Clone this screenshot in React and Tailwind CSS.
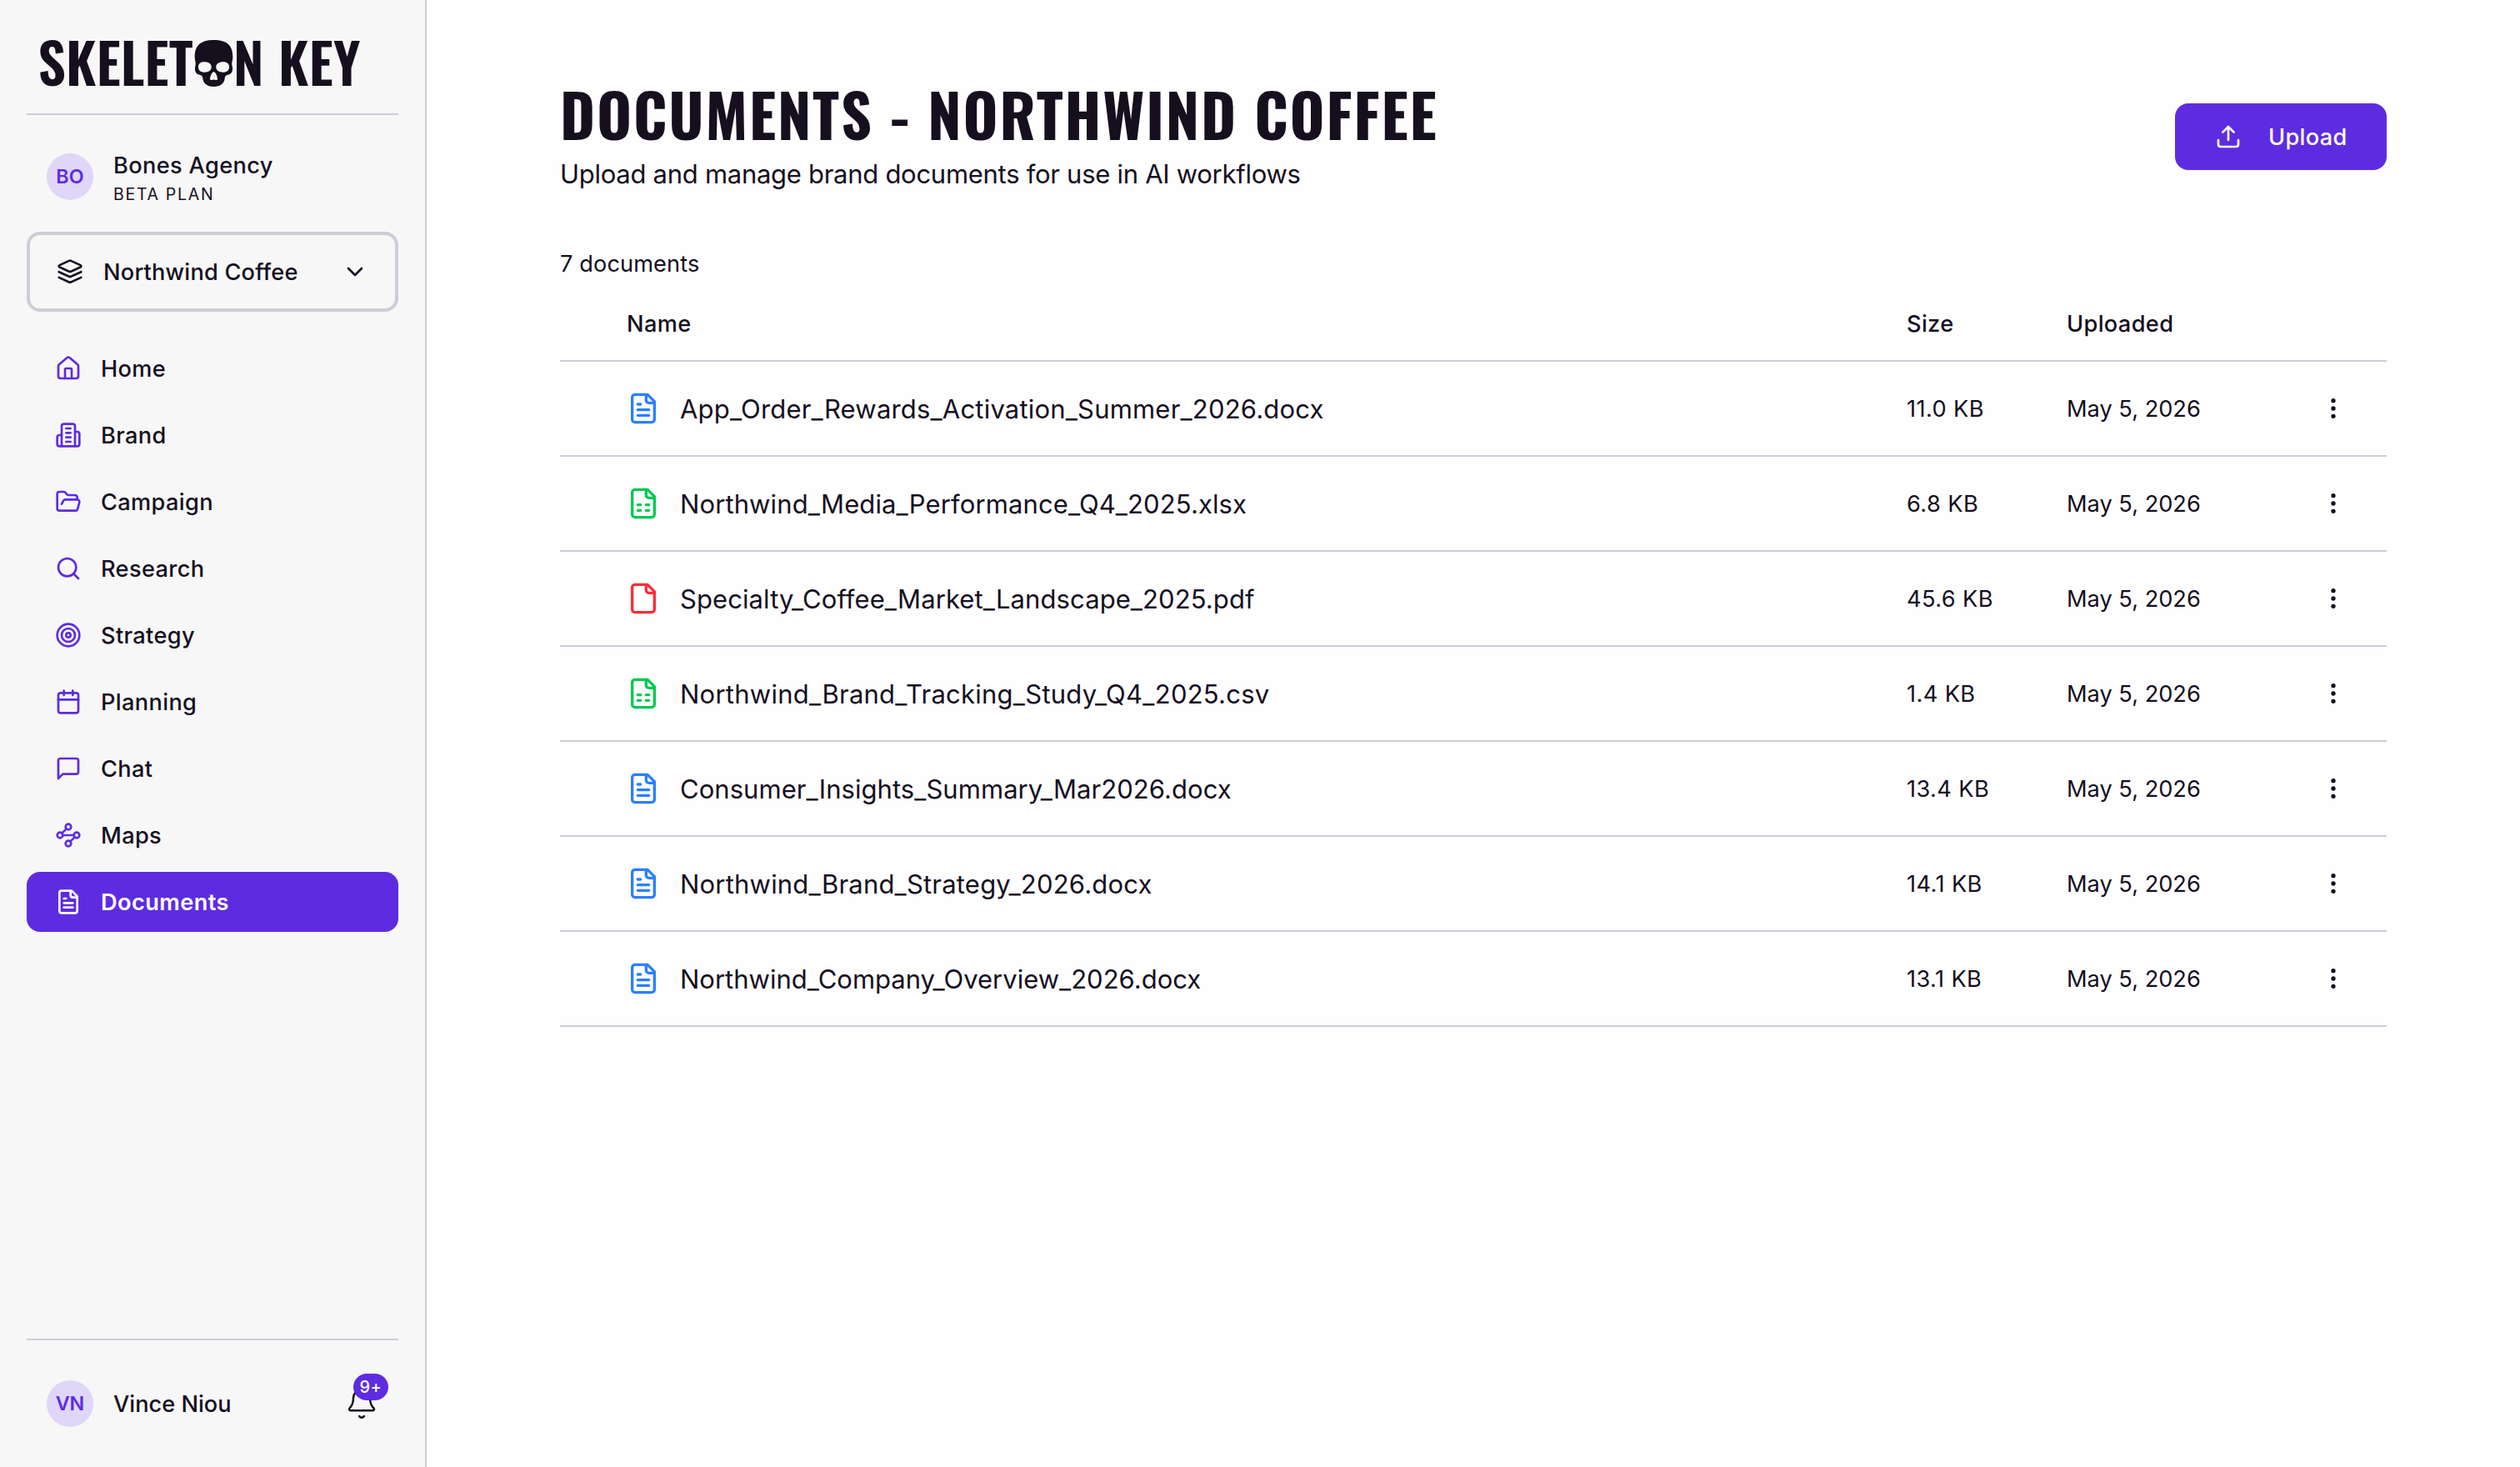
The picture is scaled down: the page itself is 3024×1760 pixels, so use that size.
import {
  Bell,
  Calendar,
  ChevronDown,
  EllipsisVertical,
  FolderOpen,
  House,
  Search,
  Target,
} from 'lucide-react';

// Outline icons that share the lucide stroke style
function Icon({ children, className, strokeWidth = 2 }) {
  return (
    <svg
      viewBox="0 0 24 24"
      fill="none"
      stroke="currentColor"
      strokeWidth={strokeWidth}
      strokeLinecap="round"
      strokeLinejoin="round"
      className={className}
    >
      {children}
    </svg>
  );
}

const LayersIcon = (props) => (
  <Icon {...props}>
    <path d="m12.83 2.18a2 2 0 0 0-1.66 0L2.6 6.08a1 1 0 0 0 0 1.83l8.58 3.91a2 2 0 0 0 1.66 0l8.58-3.9a1 1 0 0 0 0-1.83Z" />
    <path d="m22 12.18-9.17 4.16a2 2 0 0 1-1.66 0L2 12.18" />
    <path d="m22 17.18-9.17 4.16a2 2 0 0 1-1.66 0L2 17.18" />
  </Icon>
);

const BuildingIcon = (props) => (
  <Icon {...props}>
    <path d="M6 22V4a2 2 0 0 1 2-2h8a2 2 0 0 1 2 2v18Z" />
    <path d="M6 12H4a2 2 0 0 0-2 2v6a2 2 0 0 0 2 2h2" />
    <path d="M18 9h2a2 2 0 0 1 2 2v9a2 2 0 0 1-2 2h-2" />
    <path d="M10 6h4M10 10h4M10 14h4M10 18h4" />
  </Icon>
);

const ChatIcon = (props) => (
  <Icon {...props}>
    <path d="M21 15a2 2 0 0 1-2 2H7l-4 4V5a2 2 0 0 1 2-2h14a2 2 0 0 1 2 2z" />
  </Icon>
);

const WaypointsIcon = (props) => (
  <Icon {...props}>
    <circle cx="12" cy="4.5" r="2.5" />
    <path d="m10.2 6.3-3.9 3.9" />
    <circle cx="4.5" cy="12" r="2.5" />
    <path d="M7 12h10" />
    <circle cx="19.5" cy="12" r="2.5" />
    <path d="m13.8 17.7 3.9-3.9" />
    <circle cx="12" cy="19.5" r="2.5" />
  </Icon>
);

const UploadIcon = (props) => (
  <Icon {...props}>
    <path d="M21 15v4a2 2 0 0 1-2 2H5a2 2 0 0 1-2-2v-4" />
    <path d="m17 8-5-5-5 5M12 3v12" />
  </Icon>
);

const FileIcon = ({ children, ...props }) => (
  <Icon {...props}>
    <path d="M15 2H6a2 2 0 0 0-2 2v16a2 2 0 0 0 2 2h12a2 2 0 0 0 2-2V7Z" />
    <path d="M14 2v4a2 2 0 0 0 2 2h4" />
    {children}
  </Icon>
);

const FileTextIcon = (props) => (
  <FileIcon {...props}>
    <path d="M10 9H8M16 13H8M16 17H8" />
  </FileIcon>
);

const FileSheetIcon = (props) => (
  <FileIcon {...props}>
    <path d="M8 13h2M14 13h2M8 17h2M14 17h2" />
  </FileIcon>
);

function Logo() {
  return (
    <svg viewBox="0 0 392 58" className="w-[392px] h-[58px] overflow-visible fill-[#150f1e]">
      <g className="font-[Oswald] font-semibold text-[66px]">
        <text x="-2.500" y="55" className="tracking-[0.2px]">SKELET</text>
        <text x="232" y="55">N</text>
        <text x="286" y="55" className="tracking-[0.3px]">KEY</text>
      </g>
      {/* Skull standing in for the O */}
      <g transform="translate(176 -8) scale(0.3333)">
        <path d="M97.500 24C50 24 29 44 29 84C29 94 31 99 32 105C33 114 30 118 30 126C29 139 35 147 46 149C55 150 57 155 58 163C60 181 74 192 97.500 192C121 192 135 181 137 163C138 155 140 150 149 149C160 147 166 139 165 126C165 118 162 114 163 105C164 99 166 94 166 84C166 44 145 24 97.500 24Z" />
        <g className="fill-[#f7f7f7]">
          <path d="M42 119C43 106 54 102 67 103C81 104 90 112 89 123C88 135 77 140 65 140C50 140 41 133 42 119Z" />
          <path d="M153 119C152 106 141 102 128 103C114 104 105 112 106 123C107 135 118 140 130 140C145 140 154 133 153 119Z" />
          <path d="M97.500 139C91 139 86 151 84 162C83 169 90 169 94 167C96 166 99 166 101 167C105 169 112 169 111 162C109 151 104 139 97.500 139Z" />
        </g>
      </g>
    </svg>
  );
}

const navItems = [
  { label: 'Home', icon: House },
  { label: 'Brand', icon: BuildingIcon },
  { label: 'Campaign', icon: FolderOpen },
  { label: 'Research', icon: Search },
  { label: 'Strategy', icon: Target },
  { label: 'Planning', icon: Calendar },
  { label: 'Chat', icon: ChatIcon },
  { label: 'Maps', icon: WaypointsIcon },
  { label: 'Documents', icon: FileTextIcon, active: true },
];

const fileTypes = {
  docx: { icon: FileTextIcon, color: 'text-[#2b7fff]' },
  xlsx: { icon: FileSheetIcon, color: 'text-[#00c950]' },
  csv: { icon: FileSheetIcon, color: 'text-[#00c950]' },
  pdf: { icon: FileIcon, color: 'text-[#fb2c36]' },
};

const documents = [
  { name: 'App_Order_Rewards_Activation_Summer_2026.docx', size: '11.0 KB', tracking: 'tracking-[0.19px]' },
  { name: 'Northwind_Media_Performance_Q4_2025.xlsx', size: '6.8 KB', tracking: 'tracking-[0.11px]' },
  { name: 'Specialty_Coffee_Market_Landscape_2025.pdf', size: '45.6 KB', tracking: 'tracking-[0.09px]' },
  { name: 'Northwind_Brand_Tracking_Study_Q4_2025.csv', size: '1.4 KB', tracking: 'tracking-[0.25px]' },
  { name: 'Consumer_Insights_Summary_Mar2026.docx', size: '13.4 KB', tracking: 'tracking-[0.05px]' },
  { name: 'Northwind_Brand_Strategy_2026.docx', size: '14.1 KB', tracking: 'tracking-[0.2px]' },
  { name: 'Northwind_Company_Overview_2026.docx', size: '13.1 KB', tracking: 'tracking-[0px]' },
];

function Avatar({ initials }) {
  return (
    <div className="size-14 shrink-0 rounded-full bg-[#dfd6f8] text-[#5e2ce0] flex items-center justify-center text-[23.3px] font-semibold">
      {initials}
    </div>
  );
}

function Sidebar() {
  return (
    <aside className="w-[512px] shrink-0 h-full flex flex-col bg-[#f7f7f7] border-r-2 border-[#cfccd9] px-8 text-[27.2px] font-medium">
      <div className="h-[138px] shrink-0 pt-12 pl-4 border-b-2 border-[#cfccd9]">
        <Logo />
      </div>

      {/* Agency */}
      <div className="mt-[46px] h-14 pl-6 flex gap-6">
        <Avatar initials="BO" />
        <div className="-mt-[3px]">
          <div className="h-9 leading-9 tracking-[0.35px]">Bones Agency</div>
          <div className="h-8 leading-8 text-[19.5px] font-normal tracking-[1.7px]">BETA PLAN</div>
        </div>
      </div>

      {/* Brand switcher */}
      <button className="mt-[38px] h-24 shrink-0 pl-8 pr-8 flex items-center border-4 border-[#cfccd9] rounded-2xl">
        <LayersIcon className="size-8" />
        <span className="pt-0.5 ml-6 tracking-[0.2px]">Northwind Coffee</span>
        <ChevronDown className="size-8 ml-auto" strokeWidth={2} />
      </button>

      <nav className="mt-8 flex flex-col gap-2">
        {navItems.map(({ label, icon: NavIcon, active }) => (
          <a
            key={label}
            className={
              active
                ? 'h-[72px] pl-[34px] flex items-center gap-[23px] rounded-2xl bg-[#5e2ce0] text-white font-semibold tracking-[0.4px]'
                : 'h-[72px] pl-[34px] flex items-center gap-[23px] rounded-2xl tracking-[0.35px]'
            }
          >
            <NavIcon className={active ? 'size-8' : 'size-8 text-[#5e2ce0]'} strokeWidth={2} />
            <span className="pt-0.5">{label}</span>
          </a>
        ))}
      </nav>

      {/* Signed-in user */}
      <div className="mt-auto h-[154px] shrink-0 border-t-2 border-[#cfccd9] pt-12 pl-6 pr-6 flex items-start">
        <Avatar initials="VN" />
        <span className="ml-6 leading-[58px]">Vince Niou</span>
        <div className="relative ml-auto mt-2">
          <Bell className="size-10" strokeWidth={1.5} />
          <span className="absolute -top-4 left-[10px] w-[42px] h-8 rounded-full bg-[#5e2ce0] text-white text-[20px] leading-[33px] text-center tracking-[0.5px]">
            9+
          </span>
        </div>
      </div>
    </aside>
  );
}

export default function App() {
  return (
    <div className="w-[3024px] h-[1760px] flex overflow-hidden bg-[#fefefe] text-[#150f1e] font-[Inter,sans-serif]">
      <Sidebar />

      <main className="flex-1 pl-40 pr-40 pt-24">
        {/* Page header */}
        <header className="h-[140px] flex items-start justify-between">
          <div>
            <h1 className="h-20 leading-[80px] font-[Oswald,sans-serif] font-bold text-[72px] tracking-[1.8px]">
              DOCUMENTS - NORTHWIND COFFEE
            </h1>
            <p className="mt-[5px] leading-[56px] text-[31px] tracking-[-0.28px]">
              Upload and manage brand documents for use in AI workflows
            </p>
          </div>
          <button className="mt-7 h-20 w-[254px] pl-12 flex items-center gap-8 rounded-2xl bg-[#5e2ce0] text-white text-[27.2px] font-medium tracking-[0.3px]">
            <UploadIcon className="size-8" />
            <span className="pt-0.5">Upload</span>
          </button>
        </header>

        <p className="mt-[60px] h-10 leading-[42px] text-[27.2px] tracking-[0.1px]">7 documents</p>

        {/* Documents table */}
        <div className="mt-2 text-[27.2px]">
          <div className="h-[90px] pt-0.5 pl-20 flex items-center border-b-2 border-[#cfccd9] font-medium tracking-[0.35px]">
            <div className="w-[1536px]">Name</div>
            <div className="w-48">Size</div>
            <div>Uploaded</div>
          </div>
          {documents.map((doc) => {
            const { icon: TypeIcon, color } = fileTypes[doc.name.split('.').pop()];
            return (
              <div key={doc.name} className="h-[114px] pl-20 pr-12 flex items-center border-b-2 border-[#cfccd9]">
                <div className="w-[1536px] flex items-center gap-6">
                  <span className={color}>
                    <TypeIcon className="size-10" />
                  </span>
                  <span className={`pt-0.5 text-[31px] leading-10 ${doc.tracking}`}>{doc.name}</span>
                </div>
                <div className="pt-0.5 w-48 tracking-[0.4px]">{doc.size}</div>
                <div className="pt-0.5">May 5, 2026</div>
                <EllipsisVertical className="size-8 ml-auto" strokeWidth={2} />
              </div>
            );
          })}
        </div>
      </main>
    </div>
  );
}
